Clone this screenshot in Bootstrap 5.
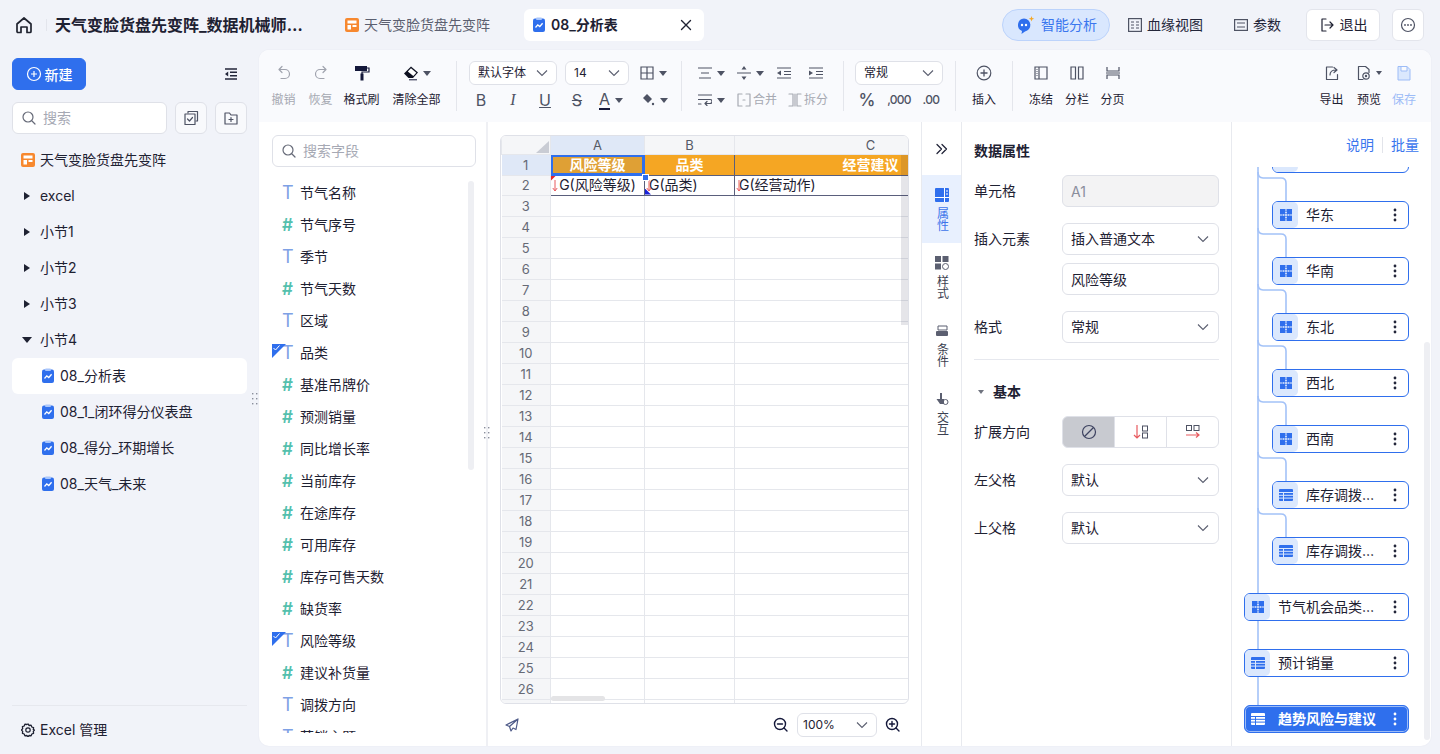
<!doctype html>
<html lang="zh-CN">
<head>
<meta charset="utf-8">
<title>08_分析表</title>
<link href="https://cdn.jsdelivr.net/npm/bootstrap@5.3.0/dist/css/bootstrap.min.css" rel="stylesheet">
<style>
:root{--ink:#1e2132;--blue:#2f6fed;--line:#e3e5ec;--bs-body-font-family:"Inter","Noto Sans CJK SC",sans-serif;}
html,body{height:754px;overflow:hidden;}
body{background:#f1f3f9;color:var(--ink);font-family:"Inter","Noto Sans CJK SC",sans-serif;font-size:14px;line-height:20px;}
svg{flex:none;display:block;}
.stroke{fill:none;stroke:currentColor;stroke-width:1.2;stroke-linecap:round;stroke-linejoin:round;}
/* top bar */
.top-bar{height:50px;padding:0 16px 0 15px;}
.home-ic{color:#20232f;}
.home-rule{display:block;width:1px;height:12px;background:#e3e5ec;margin-left:13px;}
.doc-title{width:252px;margin-left:8px;font-size:16px;font-weight:700;white-space:nowrap;overflow:hidden;text-overflow:ellipsis;}
.tab-plain{margin-left:38px;color:#5b5f70;gap:5px;}
.tab-on{margin-left:34px;width:180px;height:32px;background:#fff;border-radius:6px;padding:0 12px 0 8px;font-weight:600;gap:5px;}
.ai-pill{width:108px;height:32px;border:1px solid #bcd3fb;background:#d9e7fe;border-radius:16px;color:#3a76ee;gap:6px;padding-left:12px;}
.plain-act{color:#23263a;gap:5px;}
.out-btn{width:74px;height:32px;background:#fff;border:1px solid var(--line);border-radius:6px;gap:5px;}
.more-btn{width:32px;height:32px;background:#fff;border:1px solid var(--line);border-radius:6px;color:#4e5364;}
/* sidebar */
.side-pane{width:259px;padding:8px 12px 0;}
.new-btn{width:74px;height:32px;padding:0;background:var(--blue);border-color:var(--blue);font-size:14px;font-weight:500;border-radius:6px;gap:3px;}
.search-box{height:32px;background:#fff;border:1px solid #dfe1e8;border-radius:6px;padding:0 8px;gap:6px;color:#666a78;}
.search-box input{border:0;outline:0;padding:0;width:100%;min-width:0;background:none;font-size:14px;color:var(--ink);}
.search-box input::placeholder{color:#a6a9b4;}
.sq-btn{width:32px;height:32px;padding:0;background:#f8f9fc;border:1px solid #dfe1e8;border-radius:6px;color:#4e5364;}
.nav-tree{margin-top:8px;}
.nav-row{height:36px;padding-left:9px;gap:5px;}
.nav-row .arrow{width:0;height:0;margin:0 5px 0 3px;border-left:6px solid #1e2132;border-top:4.5px solid transparent;border-bottom:4.5px solid transparent;}
.nav-row .arrow.down{margin:0 3px 0 1px;border-top:6px solid #1e2132;border-bottom:0;border-left:5px solid transparent;border-right:5px solid transparent;}
.nav-leaf{padding-left:29px;}
.nav-on{background:#fff;border-radius:6px;}
.side-foot{height:49px;border-top:1px solid #e6e8ee;padding-left:9px;gap:5px;}
/* main */
.main-box{width:1172px;height:696px;background:#fff;border-radius:10px;overflow:hidden;position:relative;box-shadow:0 0 2px rgba(30,40,80,.06);}
.tool-bar{height:72px;background:#f9fafd;padding:0 11px 0 6px;}
.tb-sep{width:1px;height:50px;background:#e4e6ec;margin-top:11px;flex:none;}
.tb-col{padding-top:11px;height:72px;flex:none;}
.tb-ic{height:24px;}
.tb-lb{font-size:12px;line-height:16px;margin-top:7px;white-space:nowrap;}
.tb-gray{color:#a6a9b2;}
.tb-icon{color:#4e5364;}
.tb-dark{color:#14183a;}
.crt{width:0;height:0;border-left:4.5px solid transparent;border-right:4.5px solid transparent;border-top:5px solid #4e5364;flex:none;}
.crt-s{border-left-width:3.5px;border-right-width:3.5px;border-top-width:4px;}
.tb-grid{padding-top:11px;flex:none;}
.tb-line{height:24px;}
.tb-line2{height:24px;margin-top:3px;}
.cell-ic{height:24px;flex:none;gap:5px;}
.font-mini{font-size:12px;color:#1e2132;}
.merge-txt{font-size:12px;color:#a6a9b2;gap:2px;}
.num-glyph{color:#4e5364;font-weight:500;}
.tool-select.form-select{height:24px;min-height:24px;padding:0 24px 0 8px;font-size:12px;line-height:22px;border:1px solid #dfe1e8;border-radius:6px;color:var(--ink);background-color:#fff;background-image:var(--chev);background-position:right 7px center;background-size:14px 14px;box-shadow:none;}
:root{--chev:url("data:image/svg+xml,%3Csvg xmlns='http://www.w3.org/2000/svg' viewBox='0 0 14 14'%3E%3Cpath d='M2 4.5l5 5 5-5' fill='none' stroke='%235b5f70' stroke-width='1.1'/%3E%3C/svg%3E");}
/* field pane */
.field-pane{width:229px;padding:13px 0 0 13px;border-right:2px solid #eff0f4;position:relative;flex:none;}
.field-search{width:204px;}
.field-list{margin-top:10px;height:556px;overflow:hidden;position:relative;}
.field-row{height:32px;padding-left:10px;position:relative;}
.ty-t,.ty-n{width:18px;line-height:32px;flex:none;}
.ty-t{color:#7ea1e5;font-size:18px;}
.ty-n{color:#54c0ad;font-weight:600;font-size:17px;}
.check-corner{position:absolute;left:0;top:7px;width:14px;height:14px;background:var(--blue);clip-path:polygon(0 0,100% 0,0 100%);color:#fff;}
.check-corner svg{position:absolute;left:1px;top:1px;}
.field-bar{position:absolute;left:209px;top:59px;width:6px;height:289px;background:#eeeff3;border-radius:3px;}
.grip{position:absolute;color:#8a8e9c;}
/* sheet */
.sheet-pane{width:433px;padding:13px 12px 0;flex:none;}
.sheet-wrap{height:569px;border:1px solid #dfe1e8;border-radius:6px;overflow:hidden;position:relative;}
.sheet-grid{width:505px;table-layout:fixed;border-collapse:collapse;font-size:14px;}
.sheet-grid thead th{height:18px;line-height:16px;background:#f5f6f8;font-weight:400;text-align:center;color:#555a66;font-size:13px;border:1px solid #e5e7ec;border-top:0;padding:0;}
.sheet-grid tbody th{background:#f5f6f8;font-weight:400;text-align:center;color:#666a76;font-size:13px;border:1px solid #e5e7ec;border-left:0;padding:0;}
.sheet-grid td{height:21px;padding:0;border:1px solid #e5e7ec;line-height:19px;white-space:nowrap;position:relative;}
.sheet-grid .row-short td,.sheet-grid .row-short th{height:20px;line-height:18px;}
.sheet-grid .head-on{background:#dfe8f7;}
.sheet-grid .hd-cell{background:#f5a623;color:#fff;font-weight:700;text-align:center;border:1px solid #5a5f7c;border-top:0;}
.sheet-grid .hd-cell.sel{background:#dfa035;box-shadow:inset 0 0 0 2px var(--blue);border-color:var(--blue);}
.sheet-grid .bd-cell{border:1px solid #5a5f7c;border-top:1px solid #5a5f7c;padding-left:4px;}
.sheet-grid .bd-mid{padding-left:0;text-align:center;}
.corner-tri{position:absolute;left:35px;top:5px;width:13px;height:12px;background:#c9ccd4;clip-path:polygon(100% 0,100% 100%,0 100%);}
.sel-dot{position:absolute;left:141px;top:38px;width:5px;height:5px;background:var(--blue);border:1px solid #fff;box-sizing:content-box;}
.down-red{position:absolute;left:1px;top:3px;color:#e85a5f;}
.red-tri{position:absolute;left:0;top:0;width:5px;height:5px;background:#e8262a;clip-path:polygon(0 0,100% 0,0 100%);}
.navy-tri{position:absolute;left:0;bottom:0;width:6px;height:6px;background:#1a22d8;clip-path:polygon(0 0,100% 100%,0 100%);}
.v-thumb{position:absolute;right:0;top:19px;width:7px;height:170px;background:rgba(40,45,70,.12);}
.h-thumb{position:absolute;left:50px;bottom:2px;width:54px;height:5px;background:#e4e4e6;border-radius:3px;}
.sheet-foot{height:42px;padding:0 8px 0 5px;color:#14183a;}
.tool-select.zoom-select.form-select{width:80px;height:24px;min-height:24px;margin:0 8px;padding-left:5px;}
/* side tabs */
.rail{width:41px;border-left:1px solid #e8eaef;border-right:1px solid #e8eaef;flex:none;}
.rail-top{height:53px;padding-top:0;color:#23263a;}
.rail-tab{height:68px;padding-top:13px;gap:5px;color:#4e5364;}
.rail-tab span{writing-mode:vertical-rl;font-size:12px;line-height:14px;letter-spacing:0;color:#3b3f50;}
.rail-on{background:#e8f0fe;color:var(--blue);}
.rail-on span{color:#3d74ea;}
/* props */
.prop-pane{width:269px;padding:0 12px;flex:none;}
.prop-head{height:53px;padding-top:4px;font-weight:700;}
.prop-row{gap:0;margin-bottom:16px;}
.prop-row>label{width:88px;flex:none;margin:0;}
.prop-input.form-control,.prop-input.form-select{width:157px;height:32px;min-height:32px;padding:0 8px;font-size:14px;line-height:30px;border:1px solid #dfe1e8;border-radius:6px;color:var(--ink);box-shadow:none;}
.prop-input.form-select{background-image:var(--chev);background-position:right 8px center;background-size:14px 14px;}
.prop-input.form-control:disabled{background:#f3f3f4;color:#8a8e9c;opacity:1;}
.prop-rule{border-top:1px solid #e6e8ee;margin:0 0 20px;opacity:1;}
.base-head{height:24px;margin-bottom:12px;font-weight:700;padding-left:4px;gap:9px;}
.base-head .crt{border-top-color:#70747f;}
.seg-wrap{width:157px;height:32px;}
.seg-wrap .btn{width:52.3px;padding:0;border:1px solid #dfe1e8;background:#fff;}
.seg-wrap .btn.seg-on{background:#c8cad0;}
/* tree */
.tree-pane{width:200px;border-left:1px solid #e8eaef;position:relative;flex:none;}
.tree-links{height:45px;padding-right:12px;color:#3a76ee;gap:8px;}
.tree-links i{display:block;width:1px;height:16px;background:#e2e4ea;}
.tree-scroll{height:574px;overflow:hidden;position:relative;}
.tree-lines{position:absolute;left:0;top:0;color:#a3c2f8;}
.tree-stack{position:relative;padding:0 22px 0 40px;margin-top:-22px;display:flex;flex-direction:column;gap:28px;}
.node-box{height:28px;background:#fff;border:1px solid var(--blue);border-radius:6px;padding-right:11px;white-space:nowrap;}
.node-ic{width:25px;height:26px;background:#dbe8fd;border-radius:5px;margin-right:8px;color:var(--blue);flex:none;}
.node-box .nm{flex:1;min-width:0;overflow:hidden;text-overflow:ellipsis;}
.node-top{margin-left:-28px;}
.node-dots{color:#23263a;margin-left:16px;}
.node-cur{background:var(--blue);color:#fff;font-weight:700;box-shadow:0 0 0 1px #9dbcf7 inset;border-color:var(--blue);}
.node-cur .node-ic{background:transparent;color:#fff;}
.node-cur .node-dots{color:#fff;}
.tree-bar{position:absolute;right:1px;top:220px;width:6px;height:398px;background:#eeeff3;border-radius:3px;}
</style>
</head>
<body class="d-flex flex-column">
<svg class="d-none" xmlns="http://www.w3.org/2000/svg">
<symbol id="s-sheet" viewBox="0 0 14 16"><rect x="1" y="1.5" width="12" height="13.5" rx="2" fill="#2f6fed"/><rect x="4" y=".5" width="6" height="2.5" rx="1" fill="#a9c6fb"/><path d="M3.5 10.5l2.3-2.6 2 1.6 2.8-3.2" fill="none" stroke="#fff" stroke-width="1.3"/></symbol>
<symbol id="s-board" viewBox="0 0 14 14"><rect width="14" height="14" rx="2" fill="#f7882f"/><rect x="2.5" y="2.5" width="9" height="3" fill="#fff"/><rect x="2.5" y="7" width="3.5" height="4.5" fill="#fff"/><rect x="7.5" y="7" width="4" height="2" fill="#fff"/></symbol>
<symbol id="s-search" viewBox="0 0 16 16"><circle cx="7" cy="7" r="5" class="stroke"/><path d="M11 11l3 3" class="stroke"/></symbol>
<symbol id="s-puzzle" viewBox="0 0 12 12"><rect width="12" height="12" fill="currentColor"/><path d="M6 0v2.500M6 4.500v3M6 9.500V12M0 6h2.500M4.500 6h3M9.500 6H12" stroke="#fff" stroke-width=".9"/><circle cx="6" cy="3.500" r=".8" fill="#fff"/><circle cx="3.500" cy="6" r=".8" fill="#fff"/><circle cx="8.500" cy="6" r=".8" fill="#fff"/><circle cx="6" cy="8.500" r=".8" fill="#fff"/></symbol>
<symbol id="s-table" viewBox="0 0 14 12"><rect width="14" height="12" rx="1" fill="currentColor"/><path d="M0 3.5h14M0 6.3h14M0 9.1h14M4.5 3.5V12" stroke="#dbe8fd" stroke-width="1"/></symbol>
<symbol id="s-tablew" viewBox="0 0 14 12"><rect width="14" height="12" rx="1" fill="#fff"/><path d="M0 3.5h14M0 6.3h14M0 9.1h14M4.5 3.5V12" stroke="#2f6fed" stroke-width="1"/></symbol>
<symbol id="s-dots" viewBox="0 0 4 14"><circle cx="2" cy="2" r="1.4" fill="currentColor"/><circle cx="2" cy="7" r="1.4" fill="currentColor"/><circle cx="2" cy="12" r="1.4" fill="currentColor"/></symbol>
<symbol id="s-grip" viewBox="0 0 6 14"><g fill="currentColor"><rect x="0" y="1" width="1.4" height="1.4"/><rect x="4" y="1" width="1.4" height="1.4"/><rect x="0" y="6" width="1.4" height="1.4"/><rect x="4" y="6" width="1.4" height="1.4"/><rect x="0" y="11" width="1.4" height="1.4"/><rect x="4" y="11" width="1.4" height="1.4"/></g></symbol>
<symbol id="s-red" viewBox="0 0 6 14"><path d="M3 1v11M.8 9L3 12l2.2-3" fill="none" stroke="currentColor" stroke-width="1"/></symbol>
</svg>

<header class="top-bar d-flex align-items-center flex-none">
  <svg class="home-ic" width="18" height="18" viewBox="0 0 18 18"><path class="stroke" style="stroke-width:1.7" d="M2 8l7-6 7 6v7.5a1 1 0 0 1-1 1h-3V11H6v5.5H3a1 1 0 0 1-1-1z"/></svg>
  <i class="home-rule"></i>
  <div class="doc-title">天气变脸货盘先变阵_数据机械师分析报表</div>
  <div class="tab-plain d-flex align-items-center"><svg width="14" height="14"><use href="#s-board"/></svg>天气变脸货盘先变阵</div>
  <div class="tab-on d-flex align-items-center"><svg width="14" height="16"><use href="#s-sheet"/></svg>08_分析表
    <svg class="ms-auto" width="12" height="12" viewBox="0 0 12 12"><path class="stroke" style="stroke-width:1.4" d="M1.5 1.5l9 9M10.5 1.5l-9 9"/></svg></div>
  <div class="ai-pill d-flex align-items-center ms-auto">
    <svg width="20" height="20" viewBox="0 0 20 20"><path d="M9 3.5a6.5 6.5 0 0 1 1 12.9l-3.5 2.6.5-3A6.5 6.5 0 0 1 9 3.5z" fill="#2f6fed"/><circle cx="7" cy="10" r="1.2" fill="#fff"/><circle cx="11" cy="10" r="1.2" fill="#fff"/><path d="M16.500 1l.7 2 2 .7-2 .7-.7 2-.7-2-2-.7 2-.7z" fill="#f5a623"/></svg>智能分析</div>
  <div class="plain-act d-flex align-items-center" style="margin-left:18px"><svg width="14" height="14" viewBox="0 0 14 14"><rect x=".6" y=".6" width="12.800" height="12.800" fill="none" stroke="#4e5364" stroke-width="1.200"/><path d="M3 4h3M8 4h3M3 7h3M8 7h3M3 10h3M8 10h3" stroke="#4e5364"/></svg>血缘视图</div>
  <div class="plain-act d-flex align-items-center" style="margin-left:31px"><svg width="14" height="14" viewBox="0 0 14 14"><rect x=".6" y="1.600" width="12.800" height="10.800" fill="none" stroke="#4e5364" stroke-width="1.200"/><path d="M3 5h8M3 9h8" stroke="#4e5364"/></svg>参数</div>
  <div class="out-btn d-flex align-items-center justify-content-center" style="margin-left:25px"><svg width="16" height="16" viewBox="0 0 16 16"><path class="stroke" d="M7 2H3v12h4M6 8h8M11 5l3 3-3 3"/></svg>退出</div>
  <div class="more-btn d-flex align-items-center justify-content-center" style="margin-left:12px"><svg width="16" height="16" viewBox="0 0 16 16"><circle cx="8" cy="8" r="6.500" class="stroke"/><circle cx="5" cy="8" r=".9" fill="currentColor"/><circle cx="8" cy="8" r=".9" fill="currentColor"/><circle cx="11" cy="8" r=".9" fill="currentColor"/></svg></div>
</header>

<div class="d-flex flex-grow-1" style="min-height:0">
<aside class="side-pane d-flex flex-column flex-none" style="position:relative">
  <div class="d-flex align-items-center justify-content-between">
    <button class="new-btn btn btn-primary d-flex align-items-center justify-content-center" type="button"><svg width="16" height="16" viewBox="0 0 16 16"><circle cx="8" cy="8" r="6.500" fill="none" stroke="#fff" stroke-width="1.200"/><path d="M8 5v6M5 8h6" stroke="#fff" stroke-width="1.200"/></svg>新建</button>
    <svg style="margin-right:9px" width="14" height="12" viewBox="0 0 14 12"><path d="M1 1h12M6 4.300h7M6 7.700h7M1 11h12" stroke="#23263a" stroke-width="1.500"/><path d="M4.200 3.500v5L1 6z" fill="#23263a"/></svg>
  </div>
  <div class="d-flex gap-2" style="margin-top:12px">
    <div class="search-box d-flex align-items-center" style="width:155px"><svg width="16" height="16"><use href="#s-search"/></svg><input type="text" placeholder="搜索"></div>
    <button class="sq-btn d-flex align-items-center justify-content-center" type="button"><svg width="16" height="16" viewBox="0 0 16 16"><path class="stroke" d="M5 3V1.500h9.500V11H13"/><rect class="stroke" x="2" y="4" width="10" height="10.500"/><path class="stroke" d="M4.500 9l2 2 3-3.500"/></svg></button>
    <button class="sq-btn d-flex align-items-center justify-content-center" type="button"><svg width="16" height="16" viewBox="0 0 16 16"><path class="stroke" d="M2 3h4.500l1.500 2h6v9H2zM8 7.500v4M6 9.500h4"/></svg></button>
  </div>
  <nav class="nav-tree">
    <div class="nav-row d-flex align-items-center"><svg width="14" height="14"><use href="#s-board"/></svg>天气变脸货盘先变阵</div>
    <div class="nav-row d-flex align-items-center"><i class="arrow"></i>excel</div>
    <div class="nav-row d-flex align-items-center"><i class="arrow"></i>小节1</div>
    <div class="nav-row d-flex align-items-center"><i class="arrow"></i>小节2</div>
    <div class="nav-row d-flex align-items-center"><i class="arrow"></i>小节3</div>
    <div class="nav-row d-flex align-items-center"><i class="arrow down"></i>小节4</div>
    <div class="nav-row nav-leaf nav-on d-flex align-items-center"><svg width="14" height="16"><use href="#s-sheet"/></svg>08_分析表</div>
    <div class="nav-row nav-leaf d-flex align-items-center"><svg width="14" height="16"><use href="#s-sheet"/></svg>08_1_闭环得分仪表盘</div>
    <div class="nav-row nav-leaf d-flex align-items-center"><svg width="14" height="16"><use href="#s-sheet"/></svg>08_得分_环期增长</div>
    <div class="nav-row nav-leaf d-flex align-items-center"><svg width="14" height="16"><use href="#s-sheet"/></svg>08_天气_未来</div>
  </nav>
  <div class="side-foot d-flex align-items-center mt-auto"><svg width="14" height="14" viewBox="0 0 14 14"><path class="stroke" style="stroke-width:1.300" d="M7 1l1.200 1.500 1.900-.3.700 1.800 1.800.7-.3 1.900L13.500 7l-1.200 1.400.3 1.900-1.800.7-.7 1.800-1.900-.3L7 13.800l-1.200-1.300-1.900.3-.7-1.800-1.800-.7.3-1.900L.5 7l1.200-1.400-.3-1.900L3.200 3l.7-1.800 1.900.3z"/><circle class="stroke" cx="7" cy="7" r="2.200"/></svg>Excel 管理</div>
  <svg class="grip" style="left:252px;top:342px" width="6" height="14"><use href="#s-grip"/></svg>
</aside>

<main class="main-box d-flex flex-column">
  <div class="tool-bar d-flex flex-none">
    <div class="tb-col d-flex flex-column align-items-center tb-gray" style="width:37px"><div class="tb-ic d-flex align-items-center"><svg width="16" height="16" viewBox="0 0 16 16" class="tb-icon" style="color:#a0a3ae"><path class="stroke" d="M6 1.500L3 4.500l3 3M3 4.500h6a4.500 4.500 0 0 1 0 9H5"/></svg></div><div class="tb-lb">撤销</div></div>
    <div class="tb-col d-flex flex-column align-items-center tb-gray" style="width:37px"><div class="tb-ic d-flex align-items-center"><svg width="16" height="16" viewBox="0 0 16 16" style="color:#a0a3ae"><path class="stroke" d="M10 1.500l3 3-3 3M13 4.500H7a4.500 4.500 0 0 0 0 9h4"/></svg></div><div class="tb-lb">恢复</div></div>
    <div class="tb-col d-flex flex-column align-items-center" style="width:45px"><div class="tb-ic d-flex align-items-center"><svg width="16" height="16" viewBox="0 0 16 16"><rect x="1" y="1" width="12" height="5" fill="#14183a"/><path d="M13 3h2v4H8v2" fill="none" stroke="#14183a" stroke-width="1.200"/><rect x="6.500" y="8.500" width="3" height="7" fill="#14183a"/></svg></div><div class="tb-lb">格式刷</div></div>
    <div class="tb-col d-flex flex-column align-items-center" style="width:65px"><div class="tb-ic d-flex align-items-center gap-1"><svg width="16" height="16" viewBox="0 0 16 16"><path d="M1 8.500L8 1.500l7 6-5 5.500H5.500z" fill="#0d1020"/><path d="M8 3.200l5.300 4.500-3 3.300-5.500-4.600z" fill="#fff"/><path d="M6 14.800h8" stroke="#14183a"/></svg><i class="crt"></i></div><div class="tb-lb">清除全部</div></div>
    <div class="tb-sep" style="margin-left:7px"></div>
    <div class="tb-grid" style="width:225px;padding-left:8px">
      <div class="tb-line d-flex" style="padding-left:4px">
        <select class="tool-select form-select" style="width:88px"><option>默认字体</option></select>
        <select class="tool-select form-select" style="width:64px;margin-left:8px"><option>14</option></select>
        <div class="cell-ic d-flex align-items-center tb-icon" style="margin-left:11px"><svg width="14" height="14" viewBox="0 0 14 14"><path d="M1 1h12v12H1zM7 1v12M1 7h12" fill="none" stroke="#4e5364" stroke-width="1.200"/></svg><i class="crt"></i></div>
      </div>
      <div class="tb-line2 d-flex align-items-center tb-icon" style="font-size:16px">
        <div style="width:32px" class="text-center">B</div>
        <div style="width:32px;font-family:'Liberation Serif',serif" class="text-center fst-italic">I</div>
        <div style="width:32px" class="text-center text-decoration-underline">U</div>
        <div style="width:32px" class="text-center text-decoration-line-through">S</div>
        <div style="width:39px;padding-left:6px" class="cell-ic d-flex align-items-center"><span style="border-bottom:2px solid #14183a;line-height:17px">A</span><i class="crt"></i></div>
        <div style="width:39px;padding-left:9px" class="cell-ic d-flex align-items-center"><svg width="14" height="14" viewBox="0 0 14 14"><path d="M6 1l5 5-4 4-5-5z" fill="#4e5364"/><circle cx="12" cy="11" r="1.200" fill="#4e5364"/></svg><i class="crt"></i></div>
      </div>
    </div>
    <div class="tb-sep" style="margin-left:-1px"></div>
    <div class="tb-grid" style="width:161px;padding-left:8px">
      <div class="tb-line d-flex align-items-center">
        <div class="cell-ic d-flex align-items-center" style="width:39px;padding-left:8px"><svg width="14" height="12" viewBox="0 0 14 12"><path d="M0 1h14M3 6h8M1 11h12" stroke="#4e5364" stroke-width="1.200"/></svg><i class="crt"></i></div>
        <div class="cell-ic d-flex align-items-center" style="width:39px;padding-left:8px"><svg width="14" height="14" viewBox="0 0 14 14"><path d="M0 7h14" stroke="#4e5364" stroke-width="1.200"/><path d="M7 0l2.500 3.500h-5zM7 14l2.500-3.500h-5z" fill="#4e5364"/></svg><i class="crt"></i></div>
        <div style="width:32px" class="d-flex justify-content-center"><svg width="14" height="12" viewBox="0 0 14 12"><path d="M0 1h14M7 4.500h7M7 7.500h7M0 11h14" stroke="#4e5364" stroke-width="1.200"/><path d="M4 3.500v5L0 6z" fill="#4e5364"/></svg></div>
        <div style="width:32px" class="d-flex justify-content-center"><svg width="14" height="12" viewBox="0 0 14 12"><path d="M0 1h14M7 4.500h7M7 7.500h7M0 11h14" stroke="#4e5364" stroke-width="1.200"/><path d="M0 3.500v5L4 6z" fill="#4e5364"/></svg></div>
      </div>
      <div class="tb-line2 d-flex align-items-center">
        <div class="cell-ic d-flex align-items-center" style="width:47px;padding-left:8px"><svg width="14" height="12" viewBox="0 0 14 12"><path class="stroke" style="color:#4e5364" d="M0 1h14M0 5.500h12a2 2 0 0 1 0 4H7M9 7.500l-2 2 2 2M0 10h3"/></svg><i class="crt"></i></div>
        <div class="merge-txt d-flex align-items-center" style="width:51px"><svg width="14" height="14" viewBox="0 0 14 14"><path class="stroke" d="M5 1H1v12h4M9 1h4v12H9M6 7h2"/></svg>合并</div>
        <div class="merge-txt d-flex align-items-center"><svg width="14" height="14" viewBox="0 0 14 14"><path class="stroke" d="M1 1h4v12H1M13 1H9v12h4M7 1v12"/></svg>拆分</div>
      </div>
    </div>
    <div class="tb-sep"></div>
    <div class="tb-grid" style="width:111px">
      <div class="tb-line" style="padding-left:11px"><select class="tool-select form-select" style="width:88px"><option>常规</option></select></div>
      <div class="tb-line2 d-flex align-items-center num-glyph" style="padding-left:7px">
        <div style="width:32px;font-size:17px" class="text-center">%</div>
        <div style="width:32px;font-size:12px;letter-spacing:-.8px" class="text-center">,000</div>
        <div style="width:32px;font-size:12px;letter-spacing:-.6px" class="text-center">.00</div>
      </div>
    </div>
    <div class="tb-sep"></div>
    <div class="tb-col d-flex flex-column align-items-center" style="width:56px"><div class="tb-ic d-flex align-items-center"><svg width="16" height="16" viewBox="0 0 16 16"><circle cx="8" cy="8" r="6.800" class="stroke" style="color:#4e5364"/><path d="M8 4.500v7M4.500 8h7" stroke="#4e5364" stroke-width="1.300"/></svg></div><div class="tb-lb">插入</div></div>
    <div class="tb-sep"></div>
    <div style="width:10px"></div>
    <div class="tb-col d-flex flex-column align-items-center" style="width:36px"><div class="tb-ic d-flex align-items-center"><svg width="14" height="14" viewBox="0 0 14 14"><path d="M1 1h12v12H1zM5 1v12" fill="none" stroke="#4e5364" stroke-width="1.200"/><path d="M3 3v8" stroke="#4e5364" stroke-dasharray="1 1"/></svg></div><div class="tb-lb">冻结</div></div>
    <div class="tb-col d-flex flex-column align-items-center" style="width:36px"><div class="tb-ic d-flex align-items-center"><svg width="14" height="14" viewBox="0 0 14 14"><path d="M1 1h4.500v12H1zM8.500 1H13v12H8.500z" fill="none" stroke="#4e5364" stroke-width="1.200"/></svg></div><div class="tb-lb">分栏</div></div>
    <div class="tb-col d-flex flex-column align-items-center" style="width:35px"><div class="tb-ic d-flex align-items-center"><svg width="14" height="14" viewBox="0 0 14 14"><path d="M1 1v4h12V1M1 13V9h12v4M0 7h14" fill="none" stroke="#4e5364" stroke-width="1.200"/></svg></div><div class="tb-lb">分页</div></div>
    <div class="tb-col d-flex flex-column align-items-center ms-auto" style="width:37px"><div class="tb-ic d-flex align-items-center"><svg width="16" height="16" viewBox="0 0 16 16"><path class="stroke" style="color:#4e5364" d="M13.500 9.500v5h-11V2h6M6 10c0-3 2-5 6-5M10 2.500L13 5l-3 2.500"/></svg></div><div class="tb-lb">导出</div></div>
    <div class="tb-col d-flex flex-column align-items-center" style="width:38px"><div class="tb-ic d-flex align-items-center gap-1"><svg width="16" height="16" viewBox="0 0 16 16"><path class="stroke" style="color:#4e5364" d="M7 14.500H2.500v-13h7l3.500 3v3"/><circle cx="10" cy="11" r="3.200" class="stroke" style="color:#4e5364"/><circle cx="10" cy="11" r="1.200" fill="#4e5364"/></svg><i class="crt crt-s"></i></div><div class="tb-lb">预览</div></div>
    <div class="tb-col d-flex flex-column align-items-center" style="width:32px"><div class="tb-ic d-flex align-items-center"><svg width="14" height="16" viewBox="0 0 14 16"><path d="M1 1.500h9l3 3V15H1zM4 1.500V6h6V1.500" fill="#dbe8fd" stroke="#9dbcf7"/></svg></div><div class="tb-lb" style="color:#9dbcf7">保存</div></div>
  </div>

  <div class="d-flex flex-grow-1" style="min-height:0">
    <section class="field-pane">
      <div class="field-search search-box d-flex align-items-center"><svg width="16" height="16"><use href="#s-search"/></svg><input type="text" placeholder="搜索字段"></div>
      <div class="field-list">
        <div class="field-row d-flex align-items-center"><span class="ty-t">T</span>节气名称</div>
        <div class="field-row d-flex align-items-center"><span class="ty-n">#</span>节气序号</div>
        <div class="field-row d-flex align-items-center"><span class="ty-t">T</span>季节</div>
        <div class="field-row d-flex align-items-center"><span class="ty-n">#</span>节气天数</div>
        <div class="field-row d-flex align-items-center"><span class="ty-t">T</span>区域</div>
        <div class="field-row d-flex align-items-center"><span class="check-corner"><svg width="7" height="6" viewBox="0 0 7 6"><path d="M.5 3l2 2 4-4.500" fill="none" stroke="#fff"/></svg></span><span class="ty-t">T</span>品类</div>
        <div class="field-row d-flex align-items-center"><span class="ty-n">#</span>基准吊牌价</div>
        <div class="field-row d-flex align-items-center"><span class="ty-n">#</span>预测销量</div>
        <div class="field-row d-flex align-items-center"><span class="ty-n">#</span>同比增长率</div>
        <div class="field-row d-flex align-items-center"><span class="ty-n">#</span>当前库存</div>
        <div class="field-row d-flex align-items-center"><span class="ty-n">#</span>在途库存</div>
        <div class="field-row d-flex align-items-center"><span class="ty-n">#</span>可用库存</div>
        <div class="field-row d-flex align-items-center"><span class="ty-n">#</span>库存可售天数</div>
        <div class="field-row d-flex align-items-center"><span class="ty-n">#</span>缺货率</div>
        <div class="field-row d-flex align-items-center"><span class="check-corner"><svg width="7" height="6" viewBox="0 0 7 6"><path d="M.5 3l2 2 4-4.500" fill="none" stroke="#fff"/></svg></span><span class="ty-t">T</span>风险等级</div>
        <div class="field-row d-flex align-items-center"><span class="ty-n">#</span>建议补货量</div>
        <div class="field-row d-flex align-items-center"><span class="ty-t">T</span>调拨方向</div>
        <div class="field-row d-flex align-items-center"><span class="ty-t">T</span>营销主题</div>
      </div>
      <div class="field-bar"></div>
      <svg class="grip" style="left:225px;top:304px" width="6" height="14"><use href="#s-grip"/></svg>
    </section>

    <section class="sheet-pane d-flex flex-column">
      <div class="sheet-wrap">
        <table class="sheet-grid">
          <colgroup><col style="width:49px"><col style="width:94px"><col style="width:90px"><col style="width:272px"></colgroup>
          <thead><tr><th></th><th class="head-on">A</th><th>B</th><th>C</th></tr></thead>
          <tbody>
            <tr><th class="head-on">1</th><td class="hd-cell sel">风险等级</td><td class="hd-cell">品类</td><td class="hd-cell">经营建议</td></tr>
            <tr class="row-short"><th>2</th><td class="bd-cell bd-mid"><i class="red-tri"></i><svg class="down-red" width="6" height="14"><use href="#s-red"/></svg>G(风险等级)</td><td class="bd-cell"><i class="navy-tri"></i><svg class="down-red" width="6" height="14"><use href="#s-red"/></svg>G(品类)</td><td class="bd-cell"><svg class="down-red" width="6" height="14"><use href="#s-red"/></svg>G(经营动作)</td></tr>
            <tr><th>3</th><td></td><td></td><td></td></tr>
            <tr><th>4</th><td></td><td></td><td></td></tr>
            <tr><th>5</th><td></td><td></td><td></td></tr>
            <tr><th>6</th><td></td><td></td><td></td></tr>
            <tr><th>7</th><td></td><td></td><td></td></tr>
            <tr><th>8</th><td></td><td></td><td></td></tr>
            <tr><th>9</th><td></td><td></td><td></td></tr>
            <tr><th>10</th><td></td><td></td><td></td></tr>
            <tr><th>11</th><td></td><td></td><td></td></tr>
            <tr><th>12</th><td></td><td></td><td></td></tr>
            <tr><th>13</th><td></td><td></td><td></td></tr>
            <tr><th>14</th><td></td><td></td><td></td></tr>
            <tr><th>15</th><td></td><td></td><td></td></tr>
            <tr><th>16</th><td></td><td></td><td></td></tr>
            <tr><th>17</th><td></td><td></td><td></td></tr>
            <tr><th>18</th><td></td><td></td><td></td></tr>
            <tr><th>19</th><td></td><td></td><td></td></tr>
            <tr><th>20</th><td></td><td></td><td></td></tr>
            <tr><th>21</th><td></td><td></td><td></td></tr>
            <tr><th>22</th><td></td><td></td><td></td></tr>
            <tr><th>23</th><td></td><td></td><td></td></tr>
            <tr><th>24</th><td></td><td></td><td></td></tr>
            <tr><th>25</th><td></td><td></td><td></td></tr>
            <tr><th>26</th><td></td><td></td><td></td></tr>
            <tr><th></th><td></td><td></td><td></td></tr>
          </tbody>
        </table>
        <i class="corner-tri"></i><i class="sel-dot"></i><i class="v-thumb"></i><i class="h-thumb"></i>
      </div>
      <div class="sheet-foot d-flex align-items-center">
        <svg width="14" height="14" viewBox="0 0 14 14" style="color:#4e5a88"><path class="stroke" d="M13 1L1 7l3.500 1.500L6 13l2-3 3 1.500zM13 1L4.500 8.500"/></svg>
        <svg class="ms-auto" width="16" height="16" viewBox="0 0 16 16"><circle cx="7" cy="7" r="5.500" class="stroke" style="stroke-width:1.400"/><path class="stroke" style="stroke-width:1.400" d="M4.500 7h5M11 11l3 3"/></svg>
        <select class="tool-select zoom-select form-select"><option>100%</option></select>
        <svg width="16" height="16" viewBox="0 0 16 16"><circle cx="7" cy="7" r="5.500" class="stroke" style="stroke-width:1.400"/><path class="stroke" style="stroke-width:1.400" d="M4.500 7h5M7 4.500v5M11 11l3 3"/></svg>
      </div>
    </section>

    <section class="rail d-flex flex-column">
      <div class="rail-top d-flex align-items-center justify-content-center"><svg width="12" height="12" viewBox="0 0 12 12"><path class="stroke" style="stroke-width:1.300" d="M1 1.500L5.500 6 1 10.500M6 1.500L10.500 6 6 10.500"/></svg></div>
      <div class="rail-tab rail-on d-flex flex-column align-items-center"><svg width="14" height="14" viewBox="0 0 14 14"><rect width="14" height="14" rx="1" fill="#2f6fed"/><path d="M9.500 0v14M0 9.500h14" stroke="#fff"/><path d="M11 3h2M11 6h2" stroke="#fff"/></svg><span>属性</span></div>
      <div class="rail-tab d-flex flex-column align-items-center"><svg width="14" height="14" viewBox="0 0 14 14"><rect width="6" height="6" fill="#5b5f70"/><rect x="7.500" width="6" height="6" fill="#5b5f70"/><rect y="7.500" width="6" height="6" fill="#5b5f70"/><circle cx="10.500" cy="10.500" r="3" fill="none" stroke="#5b5f70"/></svg><span>样式</span></div>
      <div class="rail-tab d-flex flex-column align-items-center"><svg width="14" height="14" viewBox="0 0 14 14"><path d="M3 2h9v4H3z" fill="none" stroke="#5b5f70"/><rect x="1" y="7" width="12" height="5" rx="1" fill="#5b5f70"/></svg><span>条件</span></div>
      <div class="rail-tab d-flex flex-column align-items-center"><svg width="14" height="14" viewBox="0 0 14 14"><path d="M5 1v6H1.500L5 12h4V7H7V1z" fill="#5b5f70"/><circle cx="10.500" cy="10" r="2.500" fill="none" stroke="#5b5f70"/></svg><span>交互</span></div>
    </section>

    <section class="prop-pane d-flex flex-column">
      <div class="prop-head d-flex align-items-center">数据属性</div>
      <div class="prop-row d-flex align-items-center"><label>单元格</label><input class="prop-input form-control" value="A1" disabled></div>
      <div class="prop-row d-flex align-items-center" style="margin-bottom:8px"><label>插入元素</label><select class="prop-input form-select"><option>插入普通文本</option></select></div>
      <div class="prop-row d-flex align-items-center"><label></label><input class="prop-input form-control" value="风险等级"></div>
      <div class="prop-row d-flex align-items-center"><label>格式</label><select class="prop-input form-select"><option>常规</option></select></div>
      <hr class="prop-rule">
      <div class="base-head d-flex align-items-center"><i class="crt crt-s"></i>基本</div>
      <div class="prop-row d-flex align-items-center"><label>扩展方向</label>
        <div class="seg-wrap btn-group" role="group">
          <button class="btn seg-on d-flex align-items-center justify-content-center" type="button"><svg width="16" height="16" viewBox="0 0 16 16"><circle cx="8" cy="8" r="6.500" fill="none" stroke="#3d4260" stroke-width="1.200"/><path d="M3.500 12.500l9-9" stroke="#3d4260" stroke-width="1.200"/></svg></button>
          <button class="btn d-flex align-items-center justify-content-center" type="button"><svg width="16" height="16" viewBox="0 0 16 16"><path d="M4 1v13M1 11l3 3 3-3" fill="none" stroke="#e85a5f" stroke-width="1.200"/><rect x="9.500" y="2" width="5" height="5" fill="none" stroke="#4e5364"/><rect x="9.500" y="9" width="5" height="5" fill="none" stroke="#4e5364"/></svg></button>
          <button class="btn d-flex align-items-center justify-content-center" type="button"><svg width="16" height="16" viewBox="0 0 16 16"><rect x="1.500" y="1.500" width="5" height="5" fill="none" stroke="#4e5364"/><rect x="9" y="1.500" width="5" height="5" fill="none" stroke="#4e5364"/><path d="M1 11h13M11 8.500l3 2.500-3 2.500" fill="none" stroke="#e85a5f" stroke-width="1.200"/></svg></button>
        </div>
      </div>
      <div class="prop-row d-flex align-items-center"><label>左父格</label><select class="prop-input form-select"><option>默认</option></select></div>
      <div class="prop-row d-flex align-items-center"><label>上父格</label><select class="prop-input form-select"><option>默认</option></select></div>
    </section>

    <section class="tree-pane d-flex flex-column">
      <div class="tree-links d-flex align-items-center justify-content-end"><span>说明</span><i></i><span>批量</span></div>
      <div class="tree-scroll">
        <svg class="tree-lines" width="198" height="574" viewBox="0 0 198 574"><g fill="none" stroke="currentColor" stroke-width="1.600"><path d="M26 0V540"/><path d="M26 5q0 6 5 6h18q5 0 5 5v20"/><path d="M26 61q0 6 5 6h18q5 0 5 5v20"/><path d="M26 117q0 6 5 6h18q5 0 5 5v20"/><path d="M26 173q0 6 5 6h18q5 0 5 5v20"/><path d="M26 229q0 6 5 6h18q5 0 5 5v20"/><path d="M26 285q0 6 5 6h18q5 0 5 5v20"/><path d="M26 341q0 6 5 6h18q5 0 5 5v20"/></g></svg>
        <div class="tree-stack">
          <div class="node-box d-flex align-items-center"><div class="node-ic d-flex align-items-center justify-content-center"><svg width="12" height="12"><use href="#s-puzzle"/></svg></div></div>
          <div class="node-box d-flex align-items-center"><div class="node-ic d-flex align-items-center justify-content-center"><svg width="12" height="12"><use href="#s-puzzle"/></svg></div><div class="nm">华东</div><svg class="node-dots" width="4" height="14"><use href="#s-dots"/></svg></div>
          <div class="node-box d-flex align-items-center"><div class="node-ic d-flex align-items-center justify-content-center"><svg width="12" height="12"><use href="#s-puzzle"/></svg></div><div class="nm">华南</div><svg class="node-dots" width="4" height="14"><use href="#s-dots"/></svg></div>
          <div class="node-box d-flex align-items-center"><div class="node-ic d-flex align-items-center justify-content-center"><svg width="12" height="12"><use href="#s-puzzle"/></svg></div><div class="nm">东北</div><svg class="node-dots" width="4" height="14"><use href="#s-dots"/></svg></div>
          <div class="node-box d-flex align-items-center"><div class="node-ic d-flex align-items-center justify-content-center"><svg width="12" height="12"><use href="#s-puzzle"/></svg></div><div class="nm">西北</div><svg class="node-dots" width="4" height="14"><use href="#s-dots"/></svg></div>
          <div class="node-box d-flex align-items-center"><div class="node-ic d-flex align-items-center justify-content-center"><svg width="12" height="12"><use href="#s-puzzle"/></svg></div><div class="nm">西南</div><svg class="node-dots" width="4" height="14"><use href="#s-dots"/></svg></div>
          <div class="node-box d-flex align-items-center"><div class="node-ic d-flex align-items-center justify-content-center"><svg width="14" height="12"><use href="#s-table"/></svg></div><div class="nm">库存调拨明细表</div><svg class="node-dots" width="4" height="14"><use href="#s-dots"/></svg></div>
          <div class="node-box d-flex align-items-center"><div class="node-ic d-flex align-items-center justify-content-center"><svg width="14" height="12"><use href="#s-table"/></svg></div><div class="nm">库存调拨汇总表</div><svg class="node-dots" width="4" height="14"><use href="#s-dots"/></svg></div>
          <div class="node-box node-top d-flex align-items-center"><div class="node-ic d-flex align-items-center justify-content-center"><svg width="12" height="12"><use href="#s-puzzle"/></svg></div><div class="nm">节气机会品类分析表</div><svg class="node-dots" width="4" height="14"><use href="#s-dots"/></svg></div>
          <div class="node-box node-top d-flex align-items-center"><div class="node-ic d-flex align-items-center justify-content-center"><svg width="14" height="12"><use href="#s-table"/></svg></div><div class="nm">预计销量</div><svg class="node-dots" width="4" height="14"><use href="#s-dots"/></svg></div>
          <div class="node-box node-top node-cur d-flex align-items-center"><div class="node-ic d-flex align-items-center justify-content-center"><svg width="14" height="12"><use href="#s-tablew"/></svg></div><div class="nm">趋势风险与建议</div><svg class="node-dots" width="4" height="14"><use href="#s-dots"/></svg></div>
        </div>
      </div>
      <div class="tree-bar"></div>
    </section>
  </div>
</main>
</div>
<script src="https://cdn.jsdelivr.net/npm/bootstrap@5.3.0/dist/js/bootstrap.bundle.min.js"></script>
</body>
</html>
